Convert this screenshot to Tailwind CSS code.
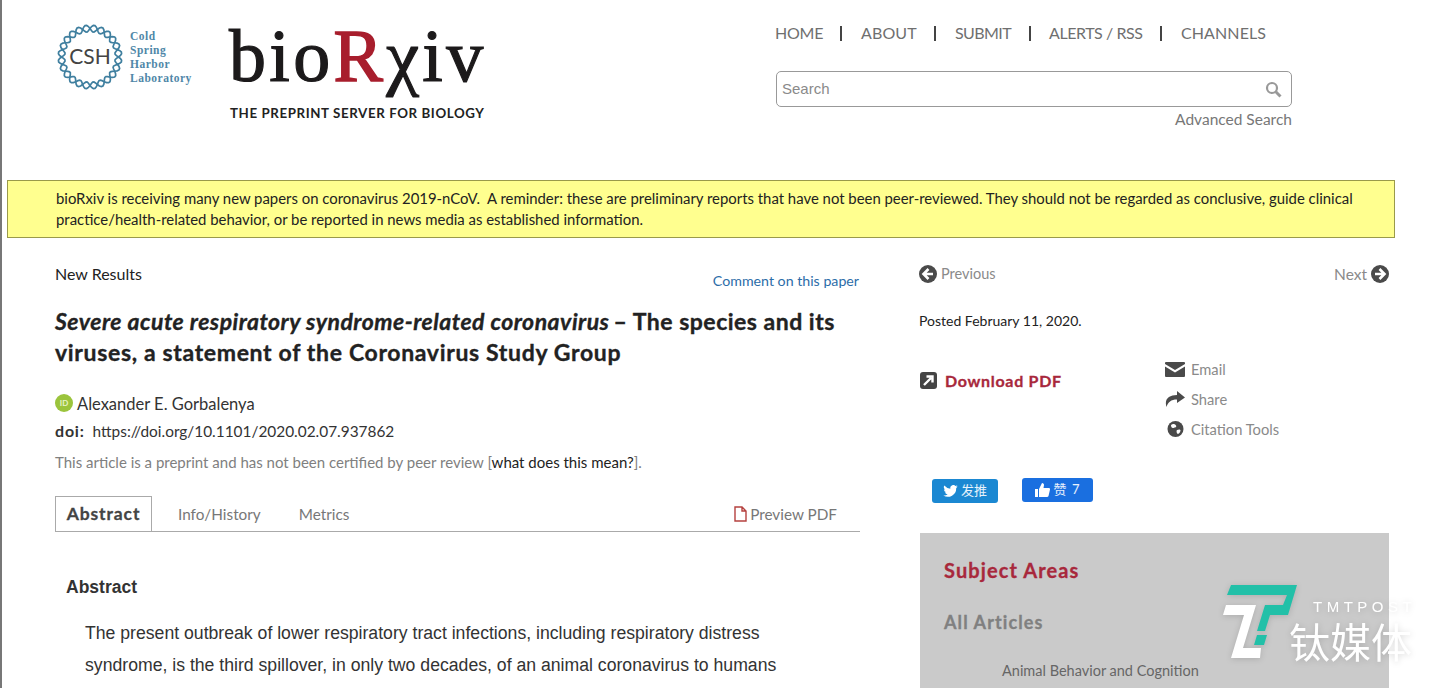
<!DOCTYPE html>
<html lang="en">
<head>
    <meta charset="UTF-8">
    <title>bioRxiv</title>
    <script src="https://cdn.jsdelivr.net/npm/@tailwindcss/browser@4"></script>
</head>
<body class="bg-white">
<div class="relative w-[1439px] h-[688px] overflow-hidden border-l-2 border-[#777] font-['Lato','Noto_Sans_CJK_SC',sans-serif] text-[#333]">

    <!-- header -->
    <header class="flex h-[180px]">
        <div class="flex items-start pl-[55px] pt-[24px]">
            <svg id="helix" width="66" height="66" viewBox="0 0 66 66" class="shrink-0">
                <text x="33" y="40" text-anchor="middle" font-family="Lato" font-size="21" fill="#444">CSH</text>
            </svg>
            <div class="ml-[7px] mt-[5px] w-[70px] text-[11.5px] leading-[14px] font-bold text-[#4f87a8] font-['Liberation_Serif',serif] tracking-[0.5px]">
                <div>Cold</div><div>Spring</div><div>Harbor</div><div>Laboratory</div>
            </div>
        </div>
        <div class="ml-[29px] pt-[19px] w-[260px]">
            <div class="h-[74px] text-[74px] leading-[74px] text-[#1c1a1b] font-['Liberation_Serif',serif] tracking-[3.3px] whitespace-nowrap [-webkit-text-stroke:1.2px_#1c1a1b]">bio<span class="text-[#a81e2d] [-webkit-text-stroke:1.6px_#a81e2d]">R</span>χiv</div>
            <div class="mt-[12px] ml-[1px] text-[13.3px] leading-[16px] font-bold text-[#222] tracking-[0.6px] whitespace-nowrap">THE PREPRINT SERVER FOR BIOLOGY</div>
        </div>
        <div class="ml-[287px] w-[518px] pt-[23px]">
            <nav class="flex items-center h-[20px] -ml-[1px] text-[16px] tracking-[-0.2px] text-[#6f6f6f] whitespace-nowrap">
                <span class="w-[48px]">HOME</span><span class="w-[2px] h-[15px] bg-[#444] ml-[17px] mr-[19px]"></span>
                <span class="w-[56px] tracking-[0.1px]">ABOUT</span><span class="w-[2px] h-[15px] bg-[#444] ml-[17px] mr-[19px]"></span>
                <span class="w-[56px] tracking-[-0.6px]">SUBMIT</span><span class="w-[2px] h-[15px] bg-[#444] ml-[18px] mr-[18px]"></span>
                <span class="w-[94px] tracking-[-0.45px]">ALERTS / RSS</span><span class="w-[2px] h-[15px] bg-[#444] ml-[17px] mr-[19px]"></span>
                <span class="tracking-[0.1px]">CHANNELS</span>
            </nav>
            <div class="mt-[28px] flex items-center justify-between h-[36px] w-[516px] pl-[5px] pr-[9px] border border-[#999] rounded-[5px]">
                <span class="text-[15px] text-[#8a8a8a] font-['Liberation_Sans',sans-serif]">Search</span>
                <svg width="17" height="17" viewBox="0 0 17 17" fill="none" stroke="#999" stroke-width="2.2"><circle cx="7" cy="7" r="5"/><path d="M10.8 10.8 15.5 15.5" stroke-width="3"/></svg>
            </div>
            <div class="mt-[1px] w-[516px] text-right text-[15.5px] leading-[22px] text-[#777]">Advanced Search</div>
        </div>
    </header>

    <!-- notice -->
    <div class="ml-[5px] w-[1388px] h-[58px] pl-[48px] pr-[30px] pt-[7px] bg-[#ffff8f] border border-[#9a9a4a] text-[14.9px] leading-[21px] text-[#222]">
        bioRxiv is receiving many new papers on coronavirus 2019-nCoV.&nbsp; A reminder: these are preliminary reports that have not been peer-reviewed. They should not be regarded as conclusive, guide clinical practice/health-related behavior, or be reported in news media as established information.
    </div>

    <main class="flex">
        <!-- article column -->
        <section class="ml-[53px] mt-[25px] w-[805px] shrink-0">
            <div class="flex justify-between">
                <span class="text-[16px] leading-[22px] text-[#222]">New Results</span>
                <span class="mt-[7px] mr-[1px] text-[14.2px] leading-[22px] text-[#2c6da8]">Comment on this paper</span>
            </div>
            <h1 class="mt-[14px] text-[23px] leading-[31px] font-bold text-[#222] tracking-[0.5px] [-webkit-text-stroke:0.35px_#222]"><em>Severe acute respiratory syndrome-related coronavirus</em> <span class="-ml-[2px]">– The species and its</span><br><span class="tracking-[0.66px]">viruses, a statement of the Coronavirus Study Group</span></h1>
            <div class="mt-[25px] flex items-center h-[22px]">
                <span class="flex items-center justify-center w-[18px] h-[18px] -mt-[3px] rounded-full bg-[#9bc43c] text-[8px] font-bold text-[#e8f2c8]">ID</span>
                <span class="ml-[4px] text-[16.5px] text-[#333]">Alexander E. Gorbalenya</span>
            </div>
            <div class="mt-[5px] text-[15.4px] leading-[22px] text-[#333]"><b class="font-bold text-[16px] tracking-[0.8px] mr-[4px]">doi:</b> https://doi.org/10.1101/2020.02.07.937862</div>
            <div class="mt-[9px] text-[15px] leading-[22px] text-[#808080]">This article is a preprint and has not been certified by peer review [<span class="text-[#222]">what does this mean?</span>].</div>
            <div class="mt-[24px] flex items-end h-[35px] border-b border-[#aaa] text-[15.3px] text-[#777]">
                <span class="flex items-center justify-center h-[35px] w-[97px] border border-b-0 border-[#aaa] text-[17.5px] font-bold text-[#444] tracking-[0.9px] [-webkit-text-stroke:0.3px_#444]">Abstract</span>
                <span class="ml-[26px] h-[34px] leading-[35px]">Info/History</span>
                <span class="ml-[38px] h-[34px] leading-[35px]">Metrics</span>
                <span class="ml-auto mr-[23px] flex items-center h-[34px]">
                    <svg width="13" height="16" viewBox="0 0 13 16" fill="none" stroke="#b5413f" stroke-width="1.4"><path d="M1 1H8L12 5V15H1Z M8 1V5H12"/></svg>
                    <span class="ml-[3px]">Preview PDF</span>
                </span>
            </div>
            <h2 class="mt-[43px] ml-[11px] text-[17.500px] leading-[24px] font-bold text-[#333] font-['Liberation_Sans',sans-serif]">Abstract</h2>
            <p class="mt-[18px] ml-[30px] w-[710px] text-[17.65px] leading-[32px] text-[#333] font-['Liberation_Sans',sans-serif]">The present outbreak of lower respiratory tract infections, including respiratory distress syndrome, is the third spillover, in only two decades, of an animal coronavirus to humans</p>
        </section>

        <!-- sidebar -->
        <aside class="ml-[60px] mt-[26px] w-[469px] shrink-0">
            <div class="flex justify-between h-[20px] text-[14.5px] leading-[20px] text-[#8a8a8a]">
                <span class="flex items-center -ml-[1px]">
                    <svg width="18" height="18" viewBox="0 0 18 18"><circle cx="9" cy="9" r="9" fill="#4a4a4a"/><path d="M9.5 4 4.5 9l5 5M5 9h9" stroke="#fff" stroke-width="2.6" fill="none"/></svg>
                    <span class="ml-[4px]">Previous</span>
                </span>
                <span class="flex items-center">
                    <span class="mr-[4px] text-[15.5px]">Next</span>
                    <svg width="18" height="18" viewBox="0 0 18 18"><circle cx="9" cy="9" r="9" fill="#4a4a4a"/><path d="M8.5 4l5 5-5 5M13 9H4" stroke="#fff" stroke-width="2.6" fill="none"/></svg>
                </span>
            </div>
            <div class="mt-[27px] -ml-[1px] text-[14px] leading-[20px] text-[#222]">Posted February 11, 2020.</div>
            <div class="mt-[23px] flex">
                <div class="w-[245px] pt-[16px] flex items-start">
                    <svg width="17" height="17" viewBox="0 0 17 17" class="mt-[2px]"><rect width="17" height="17" rx="3" fill="#444"/><path d="M4 13 11 6M6.5 4.5H12.5V10.5" stroke="#fff" stroke-width="2.4" fill="none"/></svg>
                    <span class="ml-[8px] text-[16px] leading-[22px] font-bold text-[#a8283c] tracking-[0.7px] [-webkit-text-stroke:0.3px_#a8283c]">Download PDF</span>
                </div>
                <div class="text-[14.7px] leading-[30px] text-[#8a8a8a]">
                    <div class="flex items-center h-[30px]">
                        <svg width="20" height="15" viewBox="0 0 20 15" class="mr-[6px]"><path d="M0 1a1 1 0 0 1 1-1h18a1 1 0 0 1 1 1v1l-10 6L0 2Z M0 4.500l10 6 10-6V14a1 1 0 0 1-1 1H1a1 1 0 0 1-1-1Z" fill="#4a4a4a"/></svg>
                        <span>Email</span>
                    </div>
                    <div class="flex items-center h-[30px]">
                        <svg width="20" height="16" viewBox="0 0 20 16" class="mr-[6px]"><path d="M12 0l8 6.500L12 12V8.500C6 8.500 3 11 1.500 16 -1 8 4 4 12 4Z" fill="#4a4a4a"/></svg>
                        <span>Share</span>
                    </div>
                    <div class="flex items-center h-[30px]">
                        <svg width="20" height="18" viewBox="0 0 20 18" class="mr-[6px]"><circle cx="10.500" cy="9" r="8" fill="#4a4a4a"/><path d="M6 5c2-1.500 4-1 5 .5s-1 2-2.500 2.500S6 7 6 5ZM12 10c2-1 3.500-.5 3.500.5S14 14 13 14s-2-3-1-4Z" fill="#fff"/></svg>
                        <span>Citation Tools</span>
                    </div>
                </div>
            </div>
            <div class="mt-[34px] ml-[12px] flex items-start">
                <div class="flex items-center justify-center w-[66px] h-[24px] mt-[1px] rounded-[3px] bg-[#1b88d2] text-[13px] text-white/90">
                    <svg width="15" height="12" viewBox="0 0 24 20" fill="#fff" class="mr-[3px]"><path d="M24 2.400a10 10 0 0 1-2.800.8A5 5 0 0 0 23.300.500a10 10 0 0 1-3.100 1.200 4.900 4.900 0 0 0-8.400 4.500A14 14 0 0 1 1.700 1a4.900 4.900 0 0 0 1.500 6.600 5 5 0 0 1-2.200-.6 4.900 4.900 0 0 0 3.900 4.900 5 5 0 0 1-2.200.1 4.900 4.900 0 0 0 4.600 3.400A9.900 9.900 0 0 1 0 17.400 14 14 0 0 0 21.500 5a10 10 0 0 0 2.500-2.600Z"/></svg>
                    <span>发推</span>
                </div>
                <div class="flex items-center justify-center w-[71px] h-[24px] ml-[24px] rounded-[3px] bg-[#1a6fe0] text-[13px] text-white/90">
                    <svg width="15" height="14" viewBox="0 0 15 14" fill="#fff" class="mr-[4px]"><path d="M0 6h3v8H0ZM4 6l3-6c1.500 0 2 1 2 2L8.500 5H14c1 0 1 1 1 1.500L13.500 13c-.2.700-.7 1-1.500 1H4Z"/></svg>
                    <span class="tracking-[1px]">赞 7</span>
                </div>
            </div>
            <div class="mt-[30px] w-[469px] h-[200px] pl-[24px] pt-[24px] bg-[#cacaca]">
                <div class="text-[20px] leading-[26px] font-bold text-[#a8283c] tracking-[1.1px] [-webkit-text-stroke:0.3px_#a8283c]">Subject Areas</div>
                <div class="mt-[27px] text-[18px] leading-[24px] font-bold text-[#808080] tracking-[1.1px] [-webkit-text-stroke:0.3px_#808080]">All Articles</div>
                <div class="mt-[26px] ml-[58px] text-[14.5px] leading-[22px] text-[#666]">Animal Behavior and Cognition</div>
            </div>
        </aside>
    </main>

    <!-- watermark over the page -->
    <div class="absolute left-[1213px] top-[578px] w-[210px] h-[90px] drop-shadow-[0_1px_3px_rgba(0,0,0,0.15)]">
        <svg width="90" height="90" viewBox="0 0 90 90" class="absolute left-0 top-0">
            <path d="M16 7H82L73 37H55L50 53H42L50 27H68L72 17H12ZM42 57H52L49 67H39Z" fill="#22c0a8"/>
            <path d="M11 27H41L28 70H46L45 80H16L29 37H8Z" fill="#fff"/>
        </svg>
        <span class="absolute left-[98px] top-[20px] text-[15px] leading-[18px] text-white tracking-[4.500px] font-['Liberation_Sans',sans-serif]">TMTPOST</span>
        <span class="absolute left-[74px] top-[42px] text-[41px] leading-[41px] text-white whitespace-nowrap font-['Noto_Sans_CJK_SC',sans-serif]">钛媒体</span>
    </div>
</div>
<script>
    // two strands wound round a ring
    const svg = document.getElementById('helix');
    const ns = 'http://www.w3.org/2000/svg';
    let a = '', b = '';
    for (let i = 0; i <= 360; i += 3) {
        const t = i * Math.PI / 180;
        const d = 3.4 * Math.sin(12 * t);
        const m = i === 0 ? 'M' : 'L';
        a += m + (33 + (28.5 + d) * Math.cos(t)).toFixed(2) + ' ' + (33 + (28.5 + d) * Math.sin(t)).toFixed(2);
        b += m + (33 + (28.5 - d) * Math.cos(t)).toFixed(2) + ' ' + (33 + (28.5 - d) * Math.sin(t)).toFixed(2);
    }
    [a, b].forEach(d => {
        const p = document.createElementNS(ns, 'path');
        p.setAttribute('d', d);
        p.setAttribute('fill', 'none');
        p.setAttribute('stroke', '#3f7f9f');
        p.setAttribute('stroke-width', 1.7);
        svg.appendChild(p);
    });
</script>
</body>
</html>
